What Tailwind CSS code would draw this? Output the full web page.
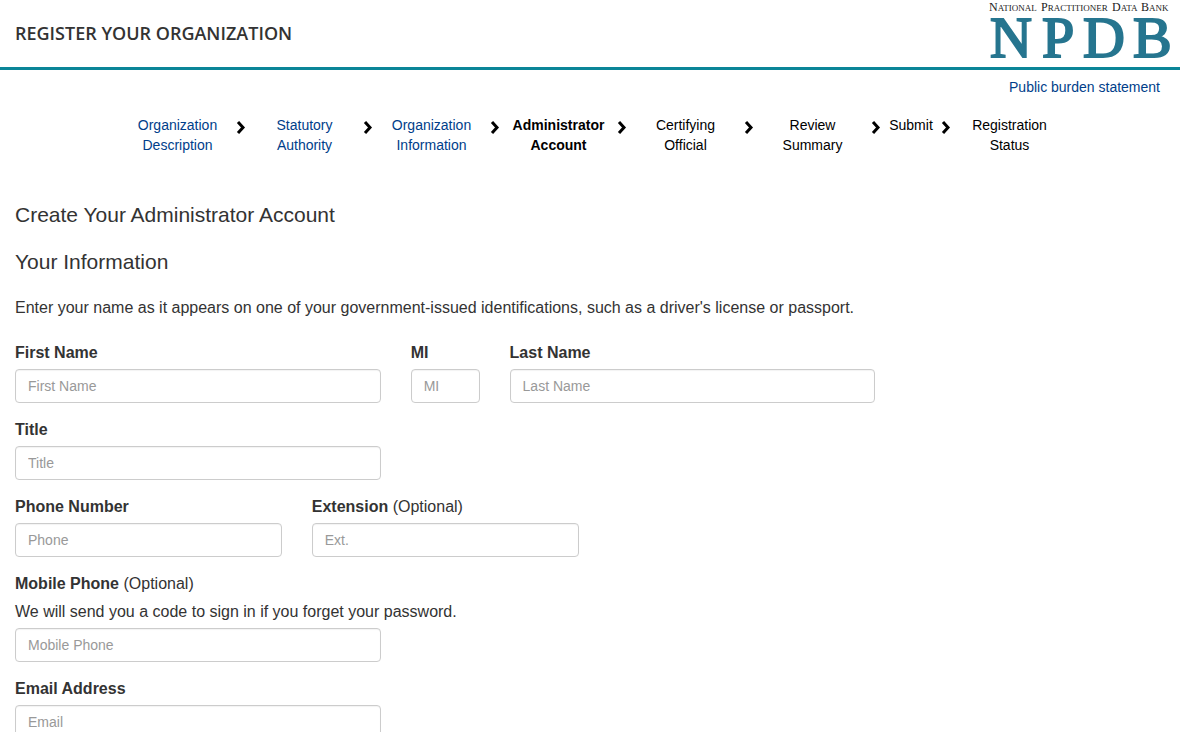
<!DOCTYPE html>
<html lang="en">
<head>
  <meta charset="UTF-8">
  <title>Register Your Organization</title>
  <script src="https://cdn.jsdelivr.net/npm/@tailwindcss/browser@4"></script>
</head>
<body class="bg-white text-[#333] text-base leading-[23px] font-['Liberation_Sans',Arial,sans-serif] overflow-x-hidden">

  <!-- Header -->
  <header class="flex justify-between h-[70px] pl-[15px] pr-[11px] border-b-3 border-[#0a8598]">
    <h1 class="self-center text-[18px] font-semibold font-['Open_Sans',sans-serif]">REGISTER YOUR ORGANIZATION</h1>
    <a href="#" aria-label="National Practitioner Data Bank">
      <svg class="w-[180px] h-[67px] overflow-visible font-['Liberation_Serif',serif]" viewBox="0 0 180 67">
        <g fill="#222" font-size="12">
          <text x="0" y="11">N<tspan font-size="9">ATIONAL</tspan></text>
          <text x="52" y="11">P<tspan font-size="9">RACTITIONER</tspan></text>
          <text x="123" y="11">D<tspan font-size="9">ATA</tspan></text>
          <text x="152" y="11">B<tspan font-size="9">ANK</tspan></text>
        </g>
        <g fill="#26758f" stroke="#26758f" stroke-width="2" font-size="58">
          <text x="1" y="57">N</text>
          <text x="53" y="57">P</text>
          <text x="94" y="57">D</text>
          <text x="144" y="57">B</text>
        </g>
      </svg>
    </a>
  </header>

  <div class="flex justify-end pr-5 pt-[7px]">
    <a href="#" class="text-[14px] leading-5 text-[#003e8a]">Public burden statement</a>
  </div>

  <!-- Steps -->
  <nav class="mt-[18px] pl-[7px]" aria-label="Registration steps">
    <ol class="flex justify-center text-[14px] leading-5 text-center text-black">
      <li class="flex"><a href="#" class="w-[113px] px-3 text-[#003e8a]">Organization Description</a><svg class="w-3.5 h-3.5 mt-[5px]" viewBox="0 0 14 14" fill="none" stroke="currentColor" stroke-width="3"><path d="M4 2l5 5.5-5 5.5"/></svg></li>
      <li class="flex"><a href="#" class="w-[113px] px-5 text-[#003e8a]">Statutory Authority</a><svg class="w-3.5 h-3.5 mt-[5px]" viewBox="0 0 14 14" fill="none" stroke="currentColor" stroke-width="3"><path d="M4 2l5 5.5-5 5.5"/></svg></li>
      <li class="flex"><a href="#" class="w-[113px] px-3 text-[#003e8a]">Organization Information</a><svg class="w-3.5 h-3.5 mt-[5px]" viewBox="0 0 14 14" fill="none" stroke="currentColor" stroke-width="3"><path d="M4 2l5 5.5-5 5.5"/></svg></li>
      <li class="flex" aria-current="step"><strong class="w-[113px] px-2">Administrator Account</strong><svg class="w-3.5 h-3.5 mt-[5px]" viewBox="0 0 14 14" fill="none" stroke="currentColor" stroke-width="3"><path d="M4 2l5 5.5-5 5.5"/></svg></li>
      <li class="flex"><span class="w-[113px] px-5">Certifying Official</span><svg class="w-3.5 h-3.5 mt-[5px]" viewBox="0 0 14 14" fill="none" stroke="currentColor" stroke-width="3"><path d="M4 2l5 5.5-5 5.5"/></svg></li>
      <li class="flex"><span class="w-[113px] px-5">Review Summary</span><svg class="w-3.5 h-3.5 mt-[5px]" viewBox="0 0 14 14" fill="none" stroke="currentColor" stroke-width="3"><path d="M4 2l5 5.5-5 5.5"/></svg></li>
      <li class="flex"><span class="w-14">Submit</span><svg class="w-3.5 h-3.5 mt-[5px]" viewBox="0 0 14 14" fill="none" stroke="currentColor" stroke-width="3"><path d="M4 2l5 5.5-5 5.5"/></svg></li>
      <li class="flex"><span class="w-[113px] px-4">Registration Status</span></li>
    </ol>
  </nav>

  <main class="pl-[15px] pr-2 mt-12">
    <h2 class="text-[21px] leading-6">Create Your Administrator Account</h2>
    <h3 class="mt-[23px] text-[21px] leading-6">Your Information</h3>
    <p class="mt-[22px]">Enter your name as it appears on one of your government-issued identifications, such as a driver's license or passport.</p>

    <form class="mt-[22px] flex flex-col gap-[15px]">
      <!-- Name -->
      <div class="grid grid-cols-12 gap-x-[30px]">
        <div class="col-span-4">
          <label for="firstName" class="block mb-[5px] font-bold">First Name</label>
          <input type="text" id="firstName" placeholder="First Name" class="block w-full h-[34px] px-3 text-[14px] border border-[#ccc] rounded inset-shadow-xs placeholder:text-[#999]">
        </div>
        <div class="col-span-1">
          <label for="mi" class="block mb-[5px] font-bold">MI</label>
          <input type="text" id="mi" placeholder="MI" class="block w-full h-[34px] px-3 text-[14px] border border-[#ccc] rounded inset-shadow-xs placeholder:text-[#999]">
        </div>
        <div class="col-span-4">
          <label for="lastName" class="block mb-[5px] font-bold">Last Name</label>
          <input type="text" id="lastName" placeholder="Last Name" class="block w-full h-[34px] px-3 text-[14px] border border-[#ccc] rounded inset-shadow-xs placeholder:text-[#999]">
        </div>
      </div>

      <div class="grid grid-cols-12 gap-x-[30px]">
        <div class="col-span-4">
          <label for="title" class="block mb-[5px] font-bold">Title</label>
          <input type="text" id="title" placeholder="Title" class="block w-full h-[34px] px-3 text-[14px] border border-[#ccc] rounded inset-shadow-xs placeholder:text-[#999]">
        </div>
      </div>

      <!-- Phone -->
      <div class="grid grid-cols-12 gap-x-[30px]">
        <div class="col-span-3">
          <label for="phone" class="block mb-[5px] font-bold">Phone Number</label>
          <input type="tel" id="phone" placeholder="Phone" class="block w-full h-[34px] px-3 text-[14px] border border-[#ccc] rounded inset-shadow-xs placeholder:text-[#999]">
        </div>
        <div class="col-span-3">
          <label for="ext" class="block mb-[5px] font-bold">Extension <span class="font-normal">(Optional)</span></label>
          <input type="text" id="ext" placeholder="Ext." class="block w-full h-[34px] px-3 text-[14px] border border-[#ccc] rounded inset-shadow-xs placeholder:text-[#999]">
        </div>
      </div>

      <div>
        <label for="mobile" class="block mb-[5px] font-bold">Mobile Phone <span class="font-normal">(Optional)</span></label>
        <p id="mobileHelp" class="mb-[5px]">We will send you a code to sign in if you forget your password.</p>
        <div class="grid grid-cols-12 gap-x-[30px]">
          <input type="tel" id="mobile" aria-describedby="mobileHelp" placeholder="Mobile Phone" class="col-span-4 block w-full h-[34px] px-3 text-[14px] border border-[#ccc] rounded inset-shadow-xs placeholder:text-[#999]">
        </div>
      </div>

      <div class="grid grid-cols-12 gap-x-[30px]">
        <div class="col-span-4">
          <label for="email" class="block mb-[5px] font-bold">Email Address</label>
          <input type="email" id="email" placeholder="Email" class="block w-full h-[34px] px-3 text-[14px] border border-[#ccc] rounded inset-shadow-xs placeholder:text-[#999]">
        </div>
      </div>
    </form>
  </main>

</body>
</html>
